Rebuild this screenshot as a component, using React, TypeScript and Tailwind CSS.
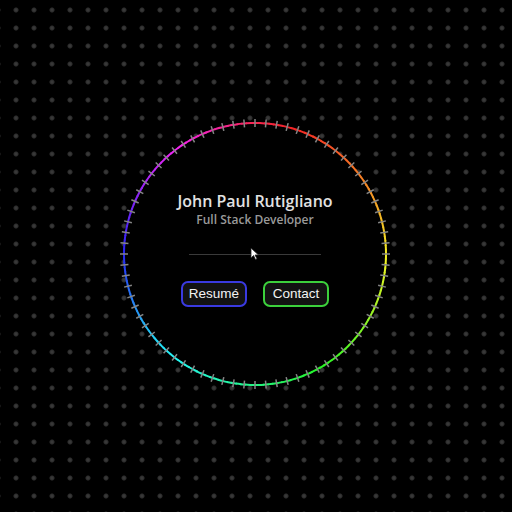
import React from "react";

const R = 131;
const C = 140;

function hueAt(t: number): number {
  const pts: [number, number][] = [
    [0, 348], [60, 390], [90, 418], [150, 480], [200, 525], [230, 550], [270, 600], [315, 650], [340, 680], [360, 708],
  ];
  for (let i = 0; i < pts.length - 1; i++) {
    const [a, ha] = pts[i];
    const [b, hb] = pts[i + 1];
    if (t >= a && t <= b) return (ha + ((t - a) / (b - a)) * (hb - ha)) % 360;
  }
  return 348;
}

function pt(deg: number, r: number): [number, number] {
  const a = ((deg - 90) * Math.PI) / 180;
  return [C + r * Math.cos(a), C + r * Math.sin(a)];
}

function Ring() {
  const segs = [];
  const N = 180;
  for (let i = 0; i < N; i++) {
    const a0 = (i * 360) / N;
    const a1 = ((i + 1.2) * 360) / N;
    const [x0, y0] = pt(a0, R);
    const [x1, y1] = pt(a1, R);
    segs.push(
      <path
        key={i}
        d={`M${x0} ${y0} A${R} ${R} 0 0 1 ${x1} ${y1}`}
        stroke={`hsl(${hueAt(a0 + 1)}, 90%, 55%)`}
        strokeWidth={2}
        fill="none"
      />
    );
  }
  const ticks = [];
  const T = 76;
  for (let i = 0; i < T; i++) {
    const a = (i * 360) / T;
    const [x0, y0] = pt(a, R - 4);
    const [x1, y1] = pt(a, R + 4);
    ticks.push(<line key={i} x1={x0} y1={y0} x2={x1} y2={y1} stroke="#858585" strokeWidth={1.5} />);
  }
  return (
    <svg width={280} height={280} viewBox="0 0 280 280" className="absolute left-[-9px] top-[-9px]">
      {segs}
      {ticks}
    </svg>
  );
}

export default function App() {
  return (
    <div className="w-[512px] h-[512px] bg-black bg-[radial-gradient(circle,#383838_1.2px,#252525_2.2px,transparent_3px)] bg-[size:18px_18px] bg-[position:7px_1px] overflow-hidden relative">
      <div className="absolute left-[124px] top-[123px] w-[262px] h-[262px] rounded-full bg-black">
        <Ring />
        <div className="relative flex flex-col items-center pt-[67px] font-['Open_Sans',sans-serif]">
          <div className="text-[16px] leading-[22px] font-semibold text-[#e2e2e2]">John Paul Rutigliano</div>
          <div className="text-[12px] leading-[16px] font-semibold text-[#9a9a9a]">Full Stack Developer</div>
          <div className="mt-[26px] w-[132px] h-px bg-[#3a3a3a]" />
          <div className="mt-[26px] flex gap-[16px] font-['Liberation_Sans',sans-serif]">
            <button className="w-[66px] h-[26px] rounded-[7px] border-2 border-[#3a3ae0] bg-[#121212] text-[#f2f2f2] text-[13.5px]">Resumé</button>
            <button className="w-[66px] h-[26px] rounded-[7px] border-2 border-[#3cd03c] bg-[#121212] text-[#f2f2f2] text-[13.5px]">Contact</button>
          </div>
        </div>
        <svg width="10" height="14" viewBox="0 0 10 14" className="absolute left-[126px] top-[124px]">
          <path d="M1 1 L1 11 L3.5 8.5 L5.5 12.5 L7 11.8 L5 8 L8.5 8 Z" fill="#fff" stroke="#222" strokeWidth="0.8" />
        </svg>
      </div>
    </div>
  );
}
